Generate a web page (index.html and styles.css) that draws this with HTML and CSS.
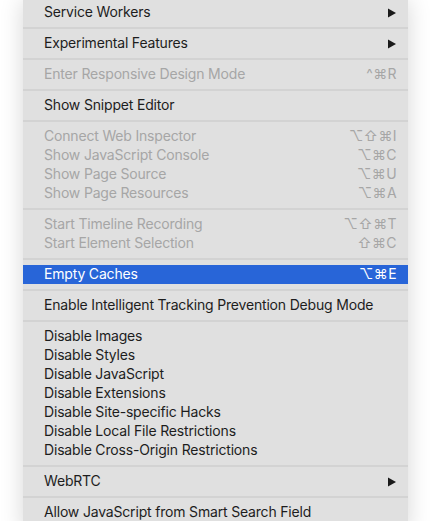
FILE: index.html
```html
<!DOCTYPE html>
<html>
<head>
<meta charset="utf-8">
<link rel="stylesheet" href="styles.css">
</head>
<body>
<div class="menu">
  <div class="item"><span>Service Workers</span><svg class="arrow" width="8" height="10" viewBox="0 0 8 10"><polygon points="0,0.5 8,5 0,9.5"/></svg></div>
  <div class="sep"></div>
  <div class="item"><span>Experimental Features</span><svg class="arrow" width="8" height="10" viewBox="0 0 8 10"><polygon points="0,0.5 8,5 0,9.5"/></svg></div>
  <div class="sep"></div>
  <div class="item disabled"><span>Enter Responsive Design Mode</span><span class="key">^⌘R</span></div>
  <div class="sep"></div>
  <div class="item"><span>Show Snippet Editor</span></div>
  <div class="sep"></div>
  <div class="item disabled"><span>Connect Web Inspector</span><span class="key">⌥⇧⌘I</span></div>
  <div class="item disabled"><span>Show JavaScript Console</span><span class="key">⌥⌘C</span></div>
  <div class="item disabled"><span>Show Page Source</span><span class="key">⌥⌘U</span></div>
  <div class="item disabled"><span>Show Page Resources</span><span class="key">⌥⌘A</span></div>
  <div class="sep"></div>
  <div class="item disabled"><span>Start Timeline Recording</span><span class="key">⌥⇧⌘T</span></div>
  <div class="item disabled"><span>Start Element Selection</span><span class="key">⇧⌘C</span></div>
  <div class="sep"></div>
  <div class="item active"><span>Empty Caches</span><span class="key">⌥⌘E</span></div>
  <div class="sep"></div>
  <div class="item"><span>Enable Intelligent Tracking Prevention Debug Mode</span></div>
  <div class="sep"></div>
  <div class="item"><span>Disable Images</span></div>
  <div class="item"><span>Disable Styles</span></div>
  <div class="item"><span>Disable JavaScript</span></div>
  <div class="item"><span>Disable Extensions</span></div>
  <div class="item"><span>Disable Site-specific Hacks</span></div>
  <div class="item"><span>Disable Local File Restrictions</span></div>
  <div class="item"><span>Disable Cross-Origin Restrictions</span></div>
  <div class="sep"></div>
  <div class="item"><span>WebRTC</span><svg class="arrow" width="8" height="10" viewBox="0 0 8 10"><polygon points="0,0.5 8,5 0,9.5"/></svg></div>
  <div class="sep"></div>
  <div class="item"><span>Allow JavaScript from Smart Search Field</span></div>
</div>
</body>
</html>
```
FILE: styles.css
```css
html, body {
  margin: 0;
  padding: 0;
  background: #ffffff;
  overflow: hidden;
}
body {
  font-family: Inter, "Liberation Sans", "DejaVu Sans", sans-serif;
  font-size: 14px;
}
.menu {
  margin-left: 23px;
  width: 385px;
  padding-top: 3px;
  background: #e0e0e0;
  box-shadow: 0 0 22px rgba(0, 0, 0, 0.16);
  min-height: 530px;
}
.item {
  height: 19px;
  display: flex;
  align-items: center;
  justify-content: space-between;
  padding: 0 11px 0 21px;
  color: #1d1d1d;
  line-height: 17px;
  white-space: nowrap;
  letter-spacing: -0.18px;
}
.item > span {
  padding-bottom: 2px;
}
.item.disabled {
  color: #a6a6a6;
}
.item.active {
  background: #2865d8;
  color: #ffffff;
}
.key {
  font-family: Inter, "DejaVu Sans", sans-serif;
  letter-spacing: 0.4px;
}
.arrow {
  fill: #1a1a1a;
  margin-right: 1px;
}
.sep {
  height: 12px;
  display: flex;
  flex-direction: column;
  padding-top: 5px;
  box-sizing: border-box;
}
.sep::before {
  content: "";
  display: block;
  height: 2px;
  background: #d3d3d3;
}
```
